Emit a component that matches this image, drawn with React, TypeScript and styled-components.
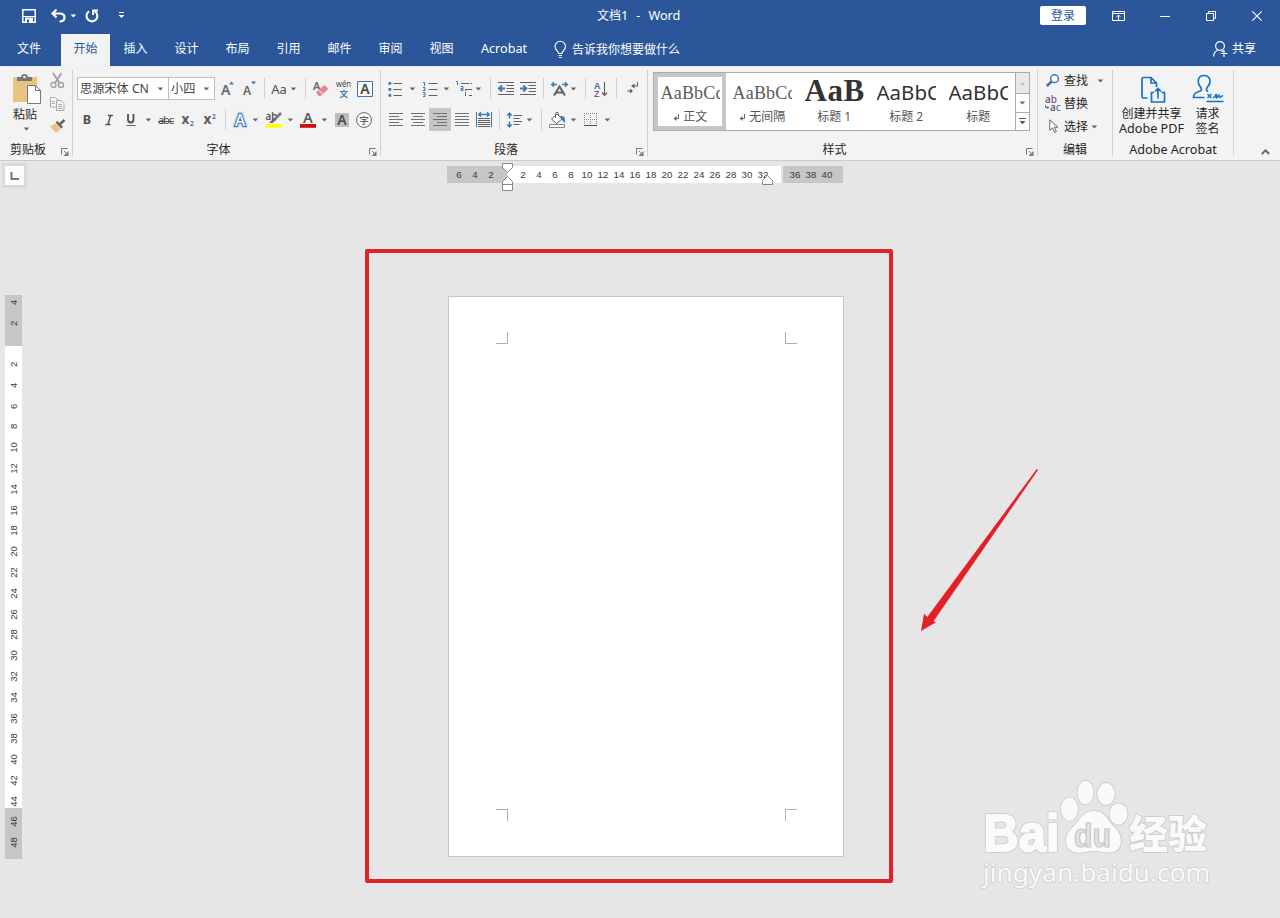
import React from 'react';
import styled, { createGlobalStyle, css } from 'styled-components';

const Global = createGlobalStyle`
  * { box-sizing: border-box; }
  html, body { margin: 0; padding: 0; }
  body {
    width: 1280px; height: 918px; overflow: hidden; background: #e6e6e6;
    font-family: "Noto Sans", "Noto Sans CJK SC", sans-serif;
    font-size: 12px; color: #262626;
  }
`;

const Window = styled.div`
  position: relative;
  width: 1280px; height: 918px; overflow: hidden;
  display: flex; flex-direction: column;
`;

/* ---------- header ---------- */
const Header = styled.header`background: #2b579a; color: #fff; height: 66px; flex: none;`;
const TitleBar = styled.div`display: flex; align-items: center; height: 31px;`;
const QuickAccess = styled.div`display: flex; align-items: center; width: 597px; padding-left: 21px;`;
const DocTitle = styled.div`width: 443px; font-size: 12.7px; line-height: 20px; white-space: pre; padding-bottom: 1px; display: flex; gap: 8px;`;
const Cjk = styled.span`font-size: 12px;`;
const SignIn = styled.button`
  width: 46px; height: 19px; border: 0; border-radius: 2px; background: #fff; color: #2b579a;
  font: inherit; line-height: 18px; padding: 0;
`;
const Glyph = styled.svg<{ $ml?: number }>`
  flex: none; display: block; overflow: visible; fill: none;
  margin-left: ${p => p.$ml ?? 0}px;
`;
const TabBar = styled.nav`display: flex; align-items: flex-end; height: 35px;`;
const Tab = styled.div<{ $w: number; $active?: boolean }>`
  width: ${p => p.$w}px; height: 32px; line-height: 30px; text-align: center; white-space: nowrap;
  ${p => p.$active && css`background: #f3f3f3; color: #2b579a;`}
`;
const Latin = styled.span`font-size: 12.6px;`;
const TellMe = styled.div`display: flex; align-items: center; height: 32px; width: 659px; margin-left: 13px; line-height: 20px; gap: 5px; padding-bottom: 1px;`;
const Share = styled.div`display: flex; align-items: center; height: 32px; gap: 4px; line-height: 20px; padding-bottom: 3px;`;

/* ---------- ribbon ---------- */
const Ribbon = styled.div`
  display: flex; height: 95px; flex: none; background: #f3f3f3;
  border-top: 1px solid #e9f2fb; border-bottom: 1px solid #cbcbcb;
`;
const Group = styled.section<{ $w: number }>`
  width: ${p => p.$w}px; height: 93px; flex: none; display: flex; flex-direction: column;
  padding-top: 10px;
`;
const Divider = styled.div`width: 1px; height: 86px; margin-top: 3px; background: #d2d2d2; flex: none;`;
const Tools = styled.div`display: flex; align-items: center; height: 23px; margin-bottom: 8px;`;
const Caption = styled.div`display: flex; height: 18px; margin-top: auto; margin-bottom: 2px; line-height: 19px; text-align: center;`;
const CaptionText = styled.div`flex: 1; white-space: nowrap;`;
const Sep = styled.i<{ $ml: number }>`width: 1px; height: 21px; background: #d0d0d0; margin-left: ${p => p.$ml}px; flex: none;`;
const Combo = styled.div<{ $w: number; $ml?: number }>`
  width: ${p => p.$w}px; height: 23px; margin-left: ${p => p.$ml ?? 0}px; padding: 0 4px 0 2px;
  display: flex; align-items: center; justify-content: space-between;
  background: #fff; border: 1px solid #c0c0c0; color: #444; line-height: 20px; white-space: nowrap; flex: none;
`;
const ComboText = styled.span`font-size: 12.2px;`;
const Letter = styled.span<{ $w: number; $ml?: number; $size?: number; $weight?: number }>`
  width: ${p => p.$w}px; margin-left: ${p => p.$ml ?? 0}px; font-size: ${p => p.$size ?? 12}px;
  font-weight: ${p => p.$weight ?? 400}; color: #505050; text-align: center; line-height: 20px; flex: none; white-space: nowrap;
`;
const Pressed = styled.div`width: 22px; height: 23px; background: #c6c6c6; margin-left: 4px; display: flex; align-items: center; justify-content: center; flex: none;`;
const ClipRow = styled.div`display: flex; height: 63px; margin-top: -3px;`;
const PasteButton = styled.div`display: flex; flex-direction: column; width: 44px; padding-left: 12px; line-height: 20px;`;
const PasteLabel = styled.span`padding-left: 1px; margin-bottom: 2px;`;
const SmallStack = styled.div`display: flex; flex-direction: column; gap: 8px; padding: 0 0 0 6px; margin-top: -1px;`;

const Gallery = styled.div`display: flex; width: 377px; height: 59px; margin: -5px 0 0 5px; border: 1px solid #ababab; background: #fff;`;
const StyleCard = styled.div<{ $active?: boolean }>`
  width: 72px; height: 57px; flex: none; padding: 0 2px 0 2.5px; text-align: center; white-space: nowrap;
  border: ${p => (p.$active ? '4px solid #c6c6c6' : '4px solid transparent')};
  display: flex; flex-direction: column; align-items: stretch; color: #555;
`;
const Preview = styled.div<{ $kind: 'serif' | 'bold' | 'sans' }>`
  height: 29px; width: 59.500px; overflow: hidden; text-align: left; flex: none;
  ${p => p.$kind === 'serif' && css`font: 18px/33px "Liberation Serif", serif; letter-spacing: .2px; color: #5c5c5c;`}
  ${p => p.$kind === 'bold' && css`font: bold 31px/28px "Liberation Serif", serif; letter-spacing: .6px; color: #333;`}
  ${p => p.$kind === 'sans' && css`font: 20.5px/31px "Noto Sans", sans-serif; letter-spacing: 0; color: #333;`}
`;
const StyleName = styled.div`line-height: 18px; margin-top: 2px; display: flex; justify-content: center; gap: 4px; align-items: center;`;
const Scroller = styled.div`width: 14px; border-left: 1px solid #ababab; display: flex; flex-direction: column; margin-left: auto; flex: none;`;
const ScrollCell = styled.div<{ $h: number; $off?: boolean }>`
  height: ${p => p.$h}px; display: flex; align-items: center; justify-content: center;
  background: ${p => (p.$off ? '#e8e8e8' : '#fff')}; border-bottom: 1px solid #ababab;
  &:last-child { border-bottom: 0; }
`;
const EditRow = styled.div`display: flex; align-items: center; height: 23px; padding-left: 7px; line-height: 20px;`;
const EditLabel = styled.span<{ $ml: number }>`margin-left: ${p => p.$ml}px;`;
const EditRows = styled.div`display: flex; flex-direction: column; margin-top: -8px;`;
const AcroRow = styled.div`display: flex; margin-top: -5px; height: 68px;`;
const AcroButton = styled.div<{ $w: number }>`width: ${p => p.$w}px; display: flex; flex-direction: column; align-items: center; line-height: 15px; white-space: nowrap;`;
const AcroText = styled.div`margin-top: 2px; text-align: center; display: flex; flex-direction: column;`;
const Collapse = styled.div`flex: 1; display: flex; align-items: flex-end; justify-content: flex-end; padding: 0 10px 5px 0;`;

/* ---------- canvas ---------- */
const TopRulerRow = styled.div`display: flex; height: 34px; flex: none;`;
const TabStop = styled.div`
  width: 25px; height: 25px; margin: 2px 0 0 2px; border: 3px solid #dadada; background: #fcfcfc; flex: none;
  display: flex; align-items: center; justify-content: center;
`;
const HRuler = styled.div`
  position: relative; display: flex; height: 17px; margin: 5px 0 0 420px;
  font: 9.7px/17px "Liberation Sans", sans-serif; color: #3a3a3a;
`;
const HZone = styled.div<{ $w: number; $pad: number; $dark?: boolean; $gap?: number }>`
  width: ${p => p.$w}px; padding-left: ${p => p.$pad}px; margin-right: ${p => p.$gap ?? 0}px; display: flex; overflow: hidden;
  background: ${p => (p.$dark ? '#c6c6c6' : '#fff')};
`;
const HNum = styled.span`width: 16px; text-align: center; flex: none;`;
const Marker = styled.svg<{ $x: number; $y: number }>`position: absolute; left: ${p => p.$x}px; top: ${p => p.$y}px; overflow: visible;`;
const Workspace = styled.div`display: flex; flex: 1;`;
const VRuler = styled.div`width: 17px; height: 564px; margin: 100px 0 0 5px; display: flex; flex-direction: column; flex: none; font: 9.5px/20.8px "Liberation Sans", sans-serif; color: #3a3a3a;`;
const VZone = styled.div<{ $h: number; $dark?: boolean; $pull: number }>`
  height: ${p => p.$h}px; background: ${p => (p.$dark ? '#c6c6c6' : '#fff')}; flex: none; overflow: hidden;
  &::before { content: ''; display: block; height: 0; margin-top: ${p => p.$pull}px; }
`;
const VNum = styled.div`height: 20.8px; width: 20.8px; margin-left: -1px; text-align: center; transform: rotate(-90deg);`;
const Page = styled.main`
  width: 396px; height: 561px; margin: 101px 0 0 426px; background: #fff; border: 1px solid #c6c6c6;
  padding: 35px 46px 35px 47px; display: flex; flex-direction: column; justify-content: space-between; flex: none;
`;
const CornerPair = styled.div`display: flex; justify-content: space-between;`;
const Corner = styled.i<{ $sides: string }>`
  width: 12px; height: 12px;
  ${p => p.$sides.split(' ').map(s => `border-${s}: 1px solid #adadad;`).join('')}
`;

/* ---------- annotations ---------- */
const RedFrame = styled.div`position: absolute; left: 365px; top: 249px; width: 528px; height: 634px; border: 4px solid #e02229; border-radius: 2px; pointer-events: none;`;
const Arrow = styled.svg`position: absolute; left: 915px; top: 464px;`;
const Watermark = styled.svg`position: absolute; left: 970px; top: 770px;`;

const G = '#636363';
const B = '#3f77b0';

const Caret = ({ ml = 0, color = '#666' }: { ml?: number; color?: string }) => (
  <Glyph $ml={ml} width="7" height="4" viewBox="0 0 7 4"><path d="M.6.400h5.600L3.400 3.500z" fill={color} /></Glyph>
);

const Launcher = () => (
  <Glyph width="16" height="18" viewBox="0 0 16 18">
    <path d="M5.500 14.500v-6h6M8 11l3.500 3.500" stroke="#777" />
    <path d="M12.500 11v5h-5z" fill="#777" />
  </Glyph>
);

type Span = [number, number];
const Lines = ({ ml = 0, rows }: { ml?: number; rows: Span[] }) => (
  <Glyph $ml={ml} width="14" height="13" viewBox="0 0 14 13">
    <path d={rows.map(([a, b], i) => `M${a} ${0.5 + i * 3}H${b}`).join('')} stroke="#707070" />
  </Glyph>
);
const alternate = (a: Span, b: Span): Span[] => [a, b, a, b, a];

const GroupCaption = ({ children, launcher = true }: { children: React.ReactNode; launcher?: boolean }) => (
  <Caption><CaptionText>{children}</CaptionText>{launcher && <Launcher />}</Caption>
);

const ReturnMark = () => (
  <Glyph width="6" height="7" viewBox="0 0 6 7"><path d="M5.500 0v4.500H2" stroke="#666" /><path d="M3.500 2v5L.5 4.500z" fill="#666" /></Glyph>
);

const ClipboardGroup = () => (
  <Group $w={72}>
    <ClipRow>
      <PasteButton>
        <Glyph width="29" height="31" viewBox="0 0 29 31">
          <path d="M1 3h24v25H1z" fill="#eac282" />
          <path d="M5 7V3h4c0-2 1.500-3 3.500-3S16 1 16 3h4v4z" fill="#777" />
          <circle cx="12.500" cy="3" r="1.300" fill="#f3f3f3" />
          <path d="M15.500 11.500h8l5 5v13h-13z" fill="#fff" stroke="#777" />
          <path d="M23.500 11.500v5h5" stroke="#777" />
        </Glyph>
        <PasteLabel>粘贴</PasteLabel>
        <Caret ml={11} />
      </PasteButton>
      <SmallStack>
        <Glyph width="15" height="16" viewBox="0 0 15 16">
          <path d="M3 0l6.500 10M11.500 0l-6.500 10" stroke="#a0a0a0" strokeWidth="1.900" />
          <circle cx="3.500" cy="12" r="2.500" stroke="#a0a0a0" strokeWidth="1.400" />
          <circle cx="11" cy="12" r="2.500" stroke="#a0a0a0" strokeWidth="1.400" />
        </Glyph>
        <Glyph width="15" height="14" viewBox="0 0 15 14">
          <path d="M.5.5h5l2.500 2.500v7H.5z" fill="#f6f6f6" stroke="#aaa" />
          <path d="M6.500 3.500h4.500l3 3v7H6.500zM8 7.500h4M8 9.500h4.500M8 11.500h4.500M2 4.500h3M2 6.500h3" fill="#f6f6f6" stroke="#aaa" />
        </Glyph>
        <Glyph width="16" height="14" viewBox="0 0 16 14">
          <path d="M0 7.500l5.500-3L10.500 10l-4.500 4z" fill="#eac282" />
          <path d="M5.500 3.500l2-1.500 5.500 6-2 1.500z" fill="#666" />
          <path d="M9.500 5.500L14.500 1" stroke="#666" strokeWidth="2.600" />
        </Glyph>
      </SmallStack>
    </ClipRow>
    <GroupCaption>剪贴板</GroupCaption>
  </Group>
);

const FontGroup = () => (
  <Group $w={307}>
    <Tools>
      <Combo $w={92} $ml={4}><ComboText>思源宋体 CN</ComboText><Caret /></Combo>
      <Combo $w={47} $ml={-1}><ComboText>小四</ComboText><Caret /></Combo>
      <Glyph $ml={5} width="16" height="16" viewBox="0 0 16 16">
        <text x="1" y="14" fontSize="14" fontWeight="600" fill="#666">A</text><path d="M9 3.500L11.500.5 14 3.500z" fill={B} />
      </Glyph>
      <Glyph $ml={6} width="16" height="16" viewBox="0 0 16 16">
        <text x="1" y="14" fontSize="12" fontWeight="600" fill="#666">A</text><path d="M9 .500h5L11.500 3.500z" fill={B} />
      </Glyph>
      <Sep $ml={6} />
      <Letter $ml={5} $w={18} $size={13}>Aa</Letter>
      <Caret ml={2} />
      <Sep $ml={8} />
      <Glyph $ml={7} width="16" height="16" viewBox="0 0 16 16">
        <text x="0" y="8.500" fontSize="11" fontWeight="600" fill="#666">A</text>
        <path d="M3 11L11.500 4l4 3.800L7.500 15h-2z" fill="#e8848f" /><path d="M5.500 9l4 4" stroke="#f3f3f3" />
      </Glyph>
      <Glyph $ml={6} width="18" height="18" viewBox="0 0 18 18">
        <text x="1" y="7" fontSize="8.500" fill="#444" textLength="15" lengthAdjust="spacingAndGlyphs">wén</text>
        <text x="4.500" y="16.500" fontSize="8.500" fontWeight="700" fill={B}>文</text>
      </Glyph>
      <Glyph $ml={4} width="16" height="16" viewBox="0 0 16 16">
        <path d="M.5.5h15v15H.5z" fill="#f8f8f8" stroke={B} /><text x="3.300" y="13.200" fontSize="14" fontWeight="600" fill="#444">A</text>
      </Glyph>
    </Tools>
    <Tools>
      <Letter $ml={7} $w={14} $size={12.5} $weight={700}>B</Letter>
      <Glyph $ml={8} width="14" height="12" viewBox="0 0 14 12"><path d="M6 1.500h5M3.500 10.500h5M8.500 1.500l-2.500 9" stroke="#505050" strokeWidth="1.400" /></Glyph>
      <Glyph $ml={8} width="14" height="12" viewBox="0 0 14 12"><path d="M4 0v5.500c0 4 5.500 4 5.500 0V0" stroke="#505050" strokeWidth="1.800" /><path d="M2.500 11.500h9" stroke={G} /></Glyph>
      <Caret ml={7} />
      <Glyph $ml={5} width="18" height="14" viewBox="0 0 18 14"><text x="1" y="11" fontSize="11" textLength="16" fill="#444">abc</text><path d="M1 8.500h16" stroke="#555" /></Glyph>
      <Glyph $ml={6} width="16" height="14" viewBox="0 0 16 14"><text x="0.500" y="11" fontSize="13.500" fontWeight="700" fill="#5a5a5a">x</text><text x="9" y="13" fontSize="6.500" fontWeight="700" fill={B}>2</text></Glyph>
      <Glyph $ml={6} width="16" height="14" viewBox="0 0 16 14"><text x="0.500" y="11" fontSize="13.500" fontWeight="700" fill="#5a5a5a">x</text><text x="9" y="5.500" fontSize="6.500" fontWeight="700" fill={B}>2</text></Glyph>
      <Sep $ml={6} />
      <Glyph $ml={6} width="16" height="16" viewBox="0 0 16 16">
        <text x="3" y="13.500" fontSize="15.500" fontWeight="500" fill="#fff" stroke="#bcd8f0" strokeWidth="4.500" strokeLinejoin="round" paintOrder="stroke">A</text>
        <text x="3" y="13.500" fontSize="15.500" fontWeight="500" fill="#fff" stroke="#3a73ad" strokeWidth="2" paintOrder="stroke">A</text>
      </Glyph>
      <Caret ml={4} />
      <Glyph $ml={6} width="18" height="16" viewBox="0 0 18 16">
        <text x="0.500" y="7.500" fontSize="10" fontWeight="500" fill="#444">ab</text>
        <path d="M16 1L9.500 7.500" stroke="#777" strokeWidth="2.500" /><path d="M4 11l4.500-4.500L10.500 8.500 7.500 11z" fill="#666" />
        <path d="M1 12h16v3.500H1z" fill="#ff0" />
      </Glyph>
      <Caret ml={4} />
      <Glyph $ml={5} width="18" height="16" viewBox="0 0 18 16">
        <text x="4" y="10.500" fontSize="14.500" fontWeight="600" fill="#5c5c5c">A</text><path d="M1 12h16v3.800H1z" fill="#d00f12" />
      </Glyph>
      <Caret ml={4} />
      <Glyph $ml={7} width="14" height="14" viewBox="0 0 14 14"><path d="M0 0h14v14H0z" fill="#bdbdbd" /><text x="2.300" y="12" fontSize="14" fontWeight="600" fill="#4a4a4a">A</text></Glyph>
      <Glyph $ml={7} width="16" height="16" viewBox="0 0 16 16"><circle cx="8" cy="8" r="7.400" stroke="#666" fill="#fafafa" /><text x="3.200" y="11.800" fontSize="9.600" fill="#444">字</text></Glyph>
    </Tools>
    <GroupCaption>字体</GroupCaption>
  </Group>
);

const ParagraphGroup = () => (
  <Group $w={266}>
    <Tools>
      <Glyph $ml={7} width="14" height="16" viewBox="0 0 14 16"><path d="M5.500 2.500h8.500M5.500 8.500h8.500M5.500 14.500h8.500" stroke={G} /><path d="M.5 1h2.700v2.700H.5zM.5 7h2.700v2.700H.5zM.5 13h2.700v2.700H.5z" fill={B} /></Glyph>
      <Caret ml={7} />
      <Glyph $ml={6} width="17" height="16" viewBox="0 0 17 16"><path d="M6.500 2.500h9M6.500 8.500h9M6.500 14.500h9" stroke={G} /><path d="M1 1.500h1.500V5M1 6.500h2V8L1.200 9.500H3.500M1 11.500h2v4H1M1.500 13.500h1" stroke={B} /></Glyph>
      <Caret ml={4} />
      <Glyph $ml={6} width="18" height="16" viewBox="0 0 18 16"><path d="M5 2.500h11M9 8.500h7M13 14.500h3" stroke={G} strokeDasharray="8 1.500" /><path d="M0 .5h1.500V4M4.500 5.500H7v4H5v-2h2M9.500 10v-1M9.500 11v4" stroke={B} /></Glyph>
      <Caret ml={1} />
      <Sep $ml={8} />
      <Glyph $ml={7} width="16" height="13" viewBox="0 0 16 13"><path d="M0 .5h16M8.500 3.500H16M8.500 6.500H16M8.500 9.500H16M0 12.500h16" stroke={G} /><path d="M7 6.500H1.500M4 3.500L1 6.500 4 9.500" stroke={B} strokeWidth="2" /></Glyph>
      <Glyph $ml={6} width="16" height="13" viewBox="0 0 16 13"><path d="M0 .5h16M8.500 3.500H16M8.500 6.500H16M8.500 9.500H16M0 12.500h16" stroke={G} /><path d="M0 6.500h5.500M3.300 3.500L6.300 6.500 3.300 9.500" stroke={B} strokeWidth="2" /></Glyph>
      <Sep $ml={7} />
      <Glyph $ml={7} width="17" height="14" viewBox="0 0 17 14"><path d="M3 13.500L8.500 4.500l5.500 9M5 10.500h7" stroke={G} strokeWidth="2.100" /><path d="M6 2.500H1M3 .3L.8 2.500 3 4.700M11 2.500h5M14 .3l2.200 2.200L14 4.700" stroke={B} strokeWidth="1.500" /></Glyph>
      <Caret ml={2} />
      <Sep $ml={8} />
      <Glyph $ml={7} width="15" height="16" viewBox="0 0 15 16"><text x="1" y="7.500" fontSize="9.500" fontWeight="600" fill={B}>A</text><text x="1" y="15.500" fontSize="9.500" fontWeight="600" fill="#8b4fa8">Z</text><path d="M11.500 1v13M9 11.500l2.500 3 2.500-3" stroke={G} strokeWidth="1.200" /></Glyph>
      <Sep $ml={8} />
      <Glyph $ml={10} width="12" height="13" viewBox="0 0 12 13"><path d="M10.500 0v4H5M0 9h5" stroke={G} strokeWidth="1.100" /><path d="M7.500 1.500v5L4 4zM3 6.500v5L6 9z" fill={G} /></Glyph>
    </Tools>
    <Tools>
      <Lines ml={8} rows={alternate([0, 14], [0, 10])} />
      <Lines ml={8} rows={alternate([0, 14], [2, 12])} />
      <Pressed><Lines rows={alternate([0, 14], [4, 14])} /></Pressed>
      <Lines ml={4} rows={alternate([0, 14], [0, 14])} />
      <Glyph $ml={7} width="16" height="15" viewBox="0 0 16 15"><path d="M.5 0v15M15.500 0v15" stroke={B} /><path d="M2 6.500h12M2 8.500h12M2 10.500h12M2 12.500h12M2 14.500h12" stroke={G} /><path d="M3 2.500h10M5 .3L2.800 2.500 5 4.700M11 .3l2.200 2.200L11 4.700" stroke={B} strokeWidth="1.400" /></Glyph>
      <Sep $ml={7} />
      <Glyph $ml={7} width="16" height="16" viewBox="0 0 16 16"><path d="M6.500 3.500h8.500M6.500 6.500h6M6.500 9.500h8.500M6.500 12.500h6" stroke={G} /><path d="M2.500 1v5.500M.3 3.500L2.500 1.200 4.700 3.500M2.500 9.500V15M.3 12.500l2.200 2.300L4.700 12.500" stroke={B} strokeWidth="1.500" /></Glyph>
      <Caret ml={3} />
      <Sep $ml={8} />
      <Glyph $ml={7} width="17" height="16" viewBox="0 0 17 16"><path d="M2.500 7L8 2l5 5-5.500 4.500z" fill="#fff" stroke={G} /><path d="M6.500 6V1.500c0-1.500 3-1.500 3 0V4" stroke={G} /><path d="M11 4c4-.5 6 2 4.500 7L13 8z" fill={B} /><path d="M.5 12.500h15v3H.5z" fill="#fff" stroke="#888" /></Glyph>
      <Caret ml={4} />
      <Glyph $ml={7} width="14" height="14" viewBox="0 0 14 14"><path d="M0 .5h13M0 6.500h13M.5 0v13M6.500 0v13M12.500 0v13" stroke="#888" strokeDasharray="1 1" /><path d="M0 12.500h13" stroke="#555" /></Glyph>
      <Caret ml={6} />
    </Tools>
    <GroupCaption>段落</GroupCaption>
  </Group>
);

const StylesGroup = () => (
  <Group $w={389}>
    <Gallery>
      <StyleCard $active><Preview $kind="serif">AaBbCc</Preview><StyleName><ReturnMark />正文</StyleName></StyleCard>
      <StyleCard><Preview $kind="serif">AaBbCc</Preview><StyleName><ReturnMark />无间隔</StyleName></StyleCard>
      <StyleCard><Preview $kind="bold">AaB</Preview><StyleName>标题 1</StyleName></StyleCard>
      <StyleCard><Preview $kind="sans">AaBbC</Preview><StyleName>标题 2</StyleName></StyleCard>
      <StyleCard><Preview $kind="sans">AaBbC</Preview><StyleName>标题</StyleName></StyleCard>
      <Scroller>
        <ScrollCell $h={21} $off><Glyph width="5" height="3" viewBox="0 0 5 3"><path d="M0 3L2.500 0 5 3z" fill="#bbb" /></Glyph></ScrollCell>
        <ScrollCell $h={19}><Caret /></ScrollCell>
        <ScrollCell $h={17}><Glyph width="7" height="7" viewBox="0 0 7 7"><path d="M0 .5h7" stroke="#555" /><path d="M.5 3h6L3.500 6.200z" fill="#555" /></Glyph></ScrollCell>
      </Scroller>
    </Gallery>
    <GroupCaption>样式</GroupCaption>
  </Group>
);

const EditGroup = () => (
  <Group $w={74}>
    <EditRows>
      <EditRow>
        <Glyph $ml={1} width="14" height="13" viewBox="0 0 14 13"><circle cx="8.500" cy="4.700" r="3.900" stroke={B} strokeWidth="1.500" fill="#fff" /><path d="M5.700 7.500L.7 12" stroke={B} strokeWidth="2.500" /></Glyph>
        <EditLabel $ml={4}>查找</EditLabel><Caret ml={9} />
      </EditRow>
      <EditRow>
        <Glyph width="16" height="16" viewBox="0 0 16 16">
          <text x="0" y="7" fontSize="10" fontWeight="500" fill="#555">a<tspan fill="#8b4fa8">b</tspan></text>
          <text x="5" y="15" fontSize="10" fontWeight="500" fill="#555">a<tspan fill={B}>c</tspan></text>
          <path d="M.5 9v2.500h3M2.300 10l1.500 1.500L2.300 13" stroke={B} />
        </Glyph>
        <EditLabel $ml={3}>替换</EditLabel>
      </EditRow>
      <EditRow>
        <Glyph $ml={4} width="10" height="15" viewBox="0 0 10 15"><path d="M.8.800v10.500l2.700-2.500 2 4.700 1.900-.8-2-4.500h3.500z" fill="#fff" stroke="#666" /></Glyph>
        <EditLabel $ml={5}>选择</EditLabel><Caret ml={3} />
      </EditRow>
    </EditRows>
    <GroupCaption launcher={false}>编辑</GroupCaption>
  </Group>
);

const AcrobatGroup = () => (
  <Group $w={120}>
    <AcroRow>
      <AcroButton $w={77}>
        <Glyph $ml={2} width="24" height="32" viewBox="0 0 24 32">
          <path d="M6.500 26H2.700c-1 0-1.700-.7-1.700-1.700V7.200c0-1 .7-1.700 1.700-1.700H10l5.500 5.500v4M10 5.500V11h5.500" stroke="#1473c8" strokeWidth="1.700" />
          <path d="M13 20.500H10.500v9.500h13v-9.500h-3M17 26.500v-9.500M14 19.500l3-3 3 3" stroke="#1473c8" strokeWidth="1.700" />
        </Glyph>
        <AcroText><span>创建并共享</span><Latin>Adobe PDF</Latin></AcroText>
      </AcroButton>
      <AcroButton $w={35}>
        <Glyph width="32" height="32" viewBox="0 0 32 32">
          <path d="M12.500 25.500H1.500c0-4 2-5 5-5.800 3.500-1 3.500-2.700 2-4.700-4-5-2.500-11.500 3.500-11.500S20 10 15.500 15c-1.500 2-1.500 3.500.5 4.500" stroke="#1473c8" strokeWidth="1.700" />
          <path d="M15.500 22l4 4M19.500 22l-4 4M21 26c2-1 3-4 3.500-3.500s-1 3.500 0 3.500 2-3 2.500-3 0 2.500.8 2.500 1.700-1.500 3.200-2M14.500 29.500h17" stroke="#1473c8" strokeWidth="1.500" />
        </Glyph>
        <AcroText><span>请求</span><span>签名</span></AcroText>
      </AcroButton>
    </AcroRow>
    <GroupCaption launcher={false}><Latin>Adobe Acrobat</Latin></GroupCaption>
  </Group>
);

const evens = (from: number, to: number) => Array.from({ length: (to - from) / 2 + 1 }, (_, i) => from + i * 2);

export default function App() {
  return (
    <Window>
      <Global />
      <Header>
        <TitleBar>
          <QuickAccess>
            <Glyph $ml={1} width="14" height="14" viewBox="0 0 14 14"><path d="M.8.800h12.400v12.400H.8z" stroke="#fff" strokeWidth="1.500" /><path d="M1 7h12M3 8.500h8V14H3z" fill="#fff" /><path d="M5 10.500h2v3H5z" fill="#2b579a" /><path d="M1 7.500h12" stroke="#fff" /></Glyph>
            <Glyph $ml={15} width="15" height="14" viewBox="0 0 15 14"><path d="M1.500 4.500h7c3 0 5 1.500 5 4s-2 4-5 4M5.500.5l-4 4 4 4" stroke="#fff" strokeWidth="2.200" /></Glyph>
            <Caret ml={4} color="#fff" />
            <Glyph $ml={8} width="14" height="14" viewBox="0 0 14 14"><path d="M4 2.400a5.400 5.400 0 1 0 5.500-.2" stroke="#fff" strokeWidth="2.100" /><path d="M8 6V1.500h5" stroke="#fff" strokeWidth="1.900" /></Glyph>
            <Glyph $ml={19} width="7" height="7" viewBox="0 0 7 7"><path d="M1 .5h5" stroke="#fff" /><path d="M.5 3h6L3.500 6z" fill="#fff" /></Glyph>
          </QuickAccess>
          <DocTitle><span><Cjk>文档</Cjk>1</span><span>-</span><span>Word</span></DocTitle>
          <SignIn>登录</SignIn>
          <Glyph $ml={26} width="13" height="10" viewBox="0 0 13 10"><path d="M.5.5h12v9H.5zM.5 2.500h12M6.500 9V4.500M4.500 6l2-2 2 2" stroke="#fff" /></Glyph>
          <Glyph $ml={35} width="10" height="10" viewBox="0 0 10 10"><path d="M0 5.500h10" stroke="#fff" /></Glyph>
          <Glyph $ml={36} width="10" height="10" viewBox="0 0 10 10"><path d="M.5 2.500h7v7h-7zM2.500 2V.5h7v7H8" stroke="#fff" /></Glyph>
          <Glyph $ml={36} width="10" height="10" viewBox="0 0 10 10"><path d="M.3.300l9.400 9.400M9.700.300L.3 9.700" stroke="#fff" strokeWidth="1.100" /></Glyph>
        </TitleBar>
        <TabBar>
          <Tab $w={58}>文件</Tab>
          <Tab $w={3} />
          <Tab $w={49} $active>开始</Tab>
          {['插入', '设计', '布局', '引用', '邮件', '审阅', '视图'].map(t => <Tab key={t} $w={51}>{t}</Tab>)}
          <Tab $w={74}><Latin>Acrobat</Latin></Tab>
          <TellMe>
            <Glyph width="13" height="17" viewBox="0 0 13 17"><path d="M4.500 12.500c0-2.500-3.500-3.500-3.500-7a5.200 5.200 0 0 1 10.500 0c0 3.500-3.500 4.500-3.500 7zM4.500 14.500H8M5 16.500h2.500" stroke="#fff" strokeWidth="1.100" /></Glyph>
            告诉我你想要做什么
          </TellMe>
          <Share>
            <Glyph width="15" height="16" viewBox="0 0 15 16"><circle cx="7" cy="5" r="4.400" stroke="#fff" strokeWidth="1.200" /><path d="M.6 15.500c0-3.500 2-5.500 4.500-6.500M8.500 9.500L10 11M11 9v7M7.500 12.500h7" stroke="#fff" strokeWidth="1.200" /></Glyph>
            共享
          </Share>
        </TabBar>
      </Header>

      <Ribbon>
        <ClipboardGroup /><Divider />
        <FontGroup /><Divider />
        <ParagraphGroup /><Divider />
        <StylesGroup /><Divider />
        <EditGroup /><Divider />
        <AcrobatGroup /><Divider />
        <Collapse><Glyph width="9" height="6" viewBox="0 0 9 6"><path d="M.8 5L4.500 1.300 8.200 5" stroke="#666" strokeWidth="1.800" /></Glyph></Collapse>
      </Ribbon>

      <TopRulerRow>
        <TabStop><Glyph width="9" height="9" viewBox="0 0 9 9"><path d="M1.500 1v7h7.500" stroke="#777" strokeWidth="2" /></Glyph></TabStop>
        <HRuler>
          <HZone $w={60} $pad={4} $dark>{[6, 4, 2].map(n => <HNum key={n}>{n}</HNum>)}</HZone>
          <HZone $w={274} $pad={8} $gap={2}>{evens(2, 32).map(n => <HNum key={n}>{n}</HNum>)}</HZone>
          <HZone $w={60} $pad={4} $dark>{[36, 38, 40].map(n => <HNum key={n}>{n}</HNum>)}</HZone>
          <Marker $x={55} $y={-3} width="11" height="28" viewBox="0 0 11 28">
            <path d="M.5.5h10v4l-5 5-5-5zM.5 27.500v-9l5-5 5 5v9zM.5 21.500h10" fill="#fff" stroke="#888" />
          </Marker>
          <Marker $x={315} $y={9} width="11" height="11" viewBox="0 0 11 11">
            <path d="M.5 9.500v-4l5-5 5 5v4z" fill="#fff" stroke="#888" />
          </Marker>
        </HRuler>
      </TopRulerRow>

      <Workspace>
        <VRuler>
          <VZone $h={51} $dark $pull={-3}>{[4, 2].map(n => <VNum key={n}>{n}</VNum>)}</VZone>
          <VZone $h={462} $pull={8}>{evens(2, 44).map(n => <VNum key={n}>{n}</VNum>)}</VZone>
          <VZone $h={51} $dark $pull={3}>{[46, 48].map(n => <VNum key={n}>{n}</VNum>)}</VZone>
        </VRuler>
        <Page>
          <CornerPair><Corner $sides="right bottom" /><Corner $sides="left bottom" /></CornerPair>
          <CornerPair><Corner $sides="right top" /><Corner $sides="left top" /></CornerPair>
        </Page>
      </Workspace>

      <RedFrame />
      <Arrow width="130" height="175" viewBox="0 0 130 175">
        <path d="M121.800 5l1.200.9L18.500 157.300l2.500 1L6 167l3-17.300 3.300 3.300z" fill="#e41f25" />
      </Arrow>
      <Watermark width="260" height="130" viewBox="0 0 260 130">
        <g fill="#fafafa" stroke="#cfcfcf" strokeWidth="2" paintOrder="stroke" strokeLinejoin="round">
          <g fontFamily="Liberation Sans, sans-serif" fontWeight="700" fontSize="52">
            <text x="13.500" y="81" stroke="#cfcfcf" strokeWidth="4" textLength="76" lengthAdjust="spacingAndGlyphs">Bai</text>
            <text x="13.500" y="81" stroke="#fafafa" strokeWidth="2" textLength="76" lengthAdjust="spacingAndGlyphs" aria-hidden="true">Bai</text>
          </g>
          <ellipse cx="99.500" cy="39" rx="8.500" ry="11.500" />
          <ellipse cx="115.500" cy="22.500" rx="8" ry="11.500" />
          <ellipse cx="136" cy="24" rx="8.500" ry="11" />
          <ellipse cx="148.500" cy="44" rx="9" ry="10.500" />
          <path d="M124 41c12 0 14 11 21 17 9 8 8 24-5 24.500-6 .3-10-1.500-16-1.500s-10 2-16 1.500C95 82 92 67 102 58c8-7 10-17 22-17z" />
          <text x="159" y="77.500" fontFamily="Noto Sans CJK SC, sans-serif" fontWeight="900" fontSize="39" textLength="78" lengthAdjust="spacingAndGlyphs">经验</text>
          <text x="13" y="112" fontFamily="Noto Sans, sans-serif" fontSize="25" strokeWidth="1.600" textLength="227" lengthAdjust="spacingAndGlyphs">jingyan.baidu.com</text>
        </g>
        <text x="104" y="77" fontFamily="Liberation Sans, sans-serif" fontWeight="700" fontSize="33" fill="#e3e3e3" stroke="#c6c6c6" strokeWidth="1.200" textLength="37" lengthAdjust="spacingAndGlyphs">du</text>
      </Watermark>
    </Window>
  );
}
